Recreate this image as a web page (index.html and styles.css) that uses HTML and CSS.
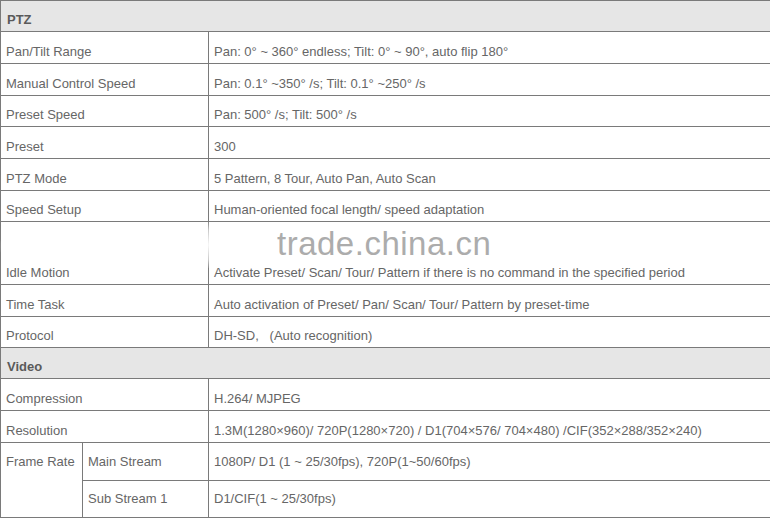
FILE: index.html
```html
<!DOCTYPE html>
<html>
<head>
<meta charset="utf-8">
<link rel="stylesheet" href="styles.css">
</head>
<body>
<div class="sheet">
  <table class="spec">
    <colgroup>
      <col class="c1">
      <col class="c2">
      <col class="c3">
    </colgroup>
    <tr class="h31 group"><td colspan="3">PTZ</td></tr>
    <tr class="h32"><td colspan="2">Pan/Tilt Range</td><td>Pan: 0° ~ 360° endless; Tilt: 0° ~ 90°, auto flip 180°</td></tr>
    <tr class="h32"><td colspan="2">Manual Control Speed</td><td>Pan: 0.1° ~350° /s; Tilt: 0.1° ~250° /s</td></tr>
    <tr class="h31"><td colspan="2">Preset Speed</td><td>Pan: 500° /s; Tilt: 500° /s</td></tr>
    <tr class="h32"><td colspan="2">Preset</td><td>300</td></tr>
    <tr class="h32"><td colspan="2">PTZ Mode</td><td>5 Pattern, 8 Tour, Auto Pan, Auto Scan</td></tr>
    <tr class="h31"><td colspan="2">Speed Setup</td><td>Human-oriented focal length/ speed adaptation</td></tr>
    <tr class="h63"><td colspan="2">Idle Motion</td><td>Activate Preset/ Scan/ Tour/ Pattern if there is no command in the specified period</td></tr>
    <tr class="h32"><td colspan="2">Time Task</td><td>Auto activation of Preset/ Pan/ Scan/ Tour/ Pattern by preset-time</td></tr>
    <tr class="h31"><td colspan="2">Protocol</td><td>DH-SD, &nbsp;&nbsp;(Auto recognition)</td></tr>
    <tr class="h31 group"><td colspan="3">Video</td></tr>
    <tr class="h32"><td colspan="2">Compression</td><td>H.264/ MJPEG</td></tr>
    <tr class="h32"><td colspan="2">Resolution</td><td>1.3M(1280×960)/ 720P(1280×720) / D1(704×576/ 704×480) /CIF(352×288/352×240)</td></tr>
    <tr class="h38 mid"><td rowspan="2" class="top">Frame Rate</td><td>Main Stream</td><td>1080P/ D1 (1 ~ 25/30fps), 720P(1~50/60fps)</td></tr>
    <tr class="h37 mid"><td>Sub Stream 1</td><td>D1/CIF(1 ~ 25/30fps)</td></tr>
  </table>
  <div class="glow glow-a"></div>
  <div class="glow glow-b"></div>
  <div class="glow glow-c"></div>
  <div class="watermark">trade.china.cn</div>
</div>
</body>
</html>
```

FILE: styles.css
```css
html, body {
  margin: 0;
  padding: 0;
  background: #ffffff;
}

.sheet {
  position: relative;
  width: 770px;
  height: 518px;
  overflow: hidden;
}

.spec {
  border-collapse: collapse;
  table-layout: fixed;
  width: 770px;
  font-family: "Liberation Sans", Arial, sans-serif;
  font-size: 13px;
  line-height: 16px;
  color: #666666;
}

.c1 { width: 82px; }
.c2 { width: 126px; }
.c3 { width: 562px; }

.spec td {
  border: 1px solid #7a7a7a;
  padding: 0 4px 3px 5px;
  vertical-align: bottom;
  white-space: nowrap;
  overflow: hidden;
}

.h31 td { height: 27px; }
.h32 td { height: 28px; }
.h63 td { height: 59px; }
.h38 td { height: 37px; }
.h37 td { height: 36px; }

.spec .group td {
  background: #e6e6e6;
  font-weight: bold;
  color: #5a5a5a;
  padding-left: 6px;
}

.spec .mid td {
  vertical-align: middle;
  padding-bottom: 0;
}

.spec .mid td.top {
  vertical-align: top;
  padding-top: 11px;
}

.watermark {
  position: absolute;
  left: 277px;
  top: 226px;
  font-family: "Liberation Sans", Arial, sans-serif;
  font-size: 33px;
  line-height: 36px;
  letter-spacing: 0.5px;
  color: #acacac;
  white-space: nowrap;
}

.glow {
  position: absolute;
  background: radial-gradient(ellipse at center, rgba(255,255,255,0.95) 0%, rgba(255,255,255,0.6) 45%, rgba(255,255,255,0) 75%);
}

.glow-a {
  left: 196px;
  top: 222px;
  width: 24px;
  height: 46px;
}

.glow-b {
  left: 0;
  top: 228px;
  width: 90px;
  height: 36px;
}

.glow-c {
  left: 590px;
  top: 228px;
  width: 180px;
  height: 36px;
}
```
